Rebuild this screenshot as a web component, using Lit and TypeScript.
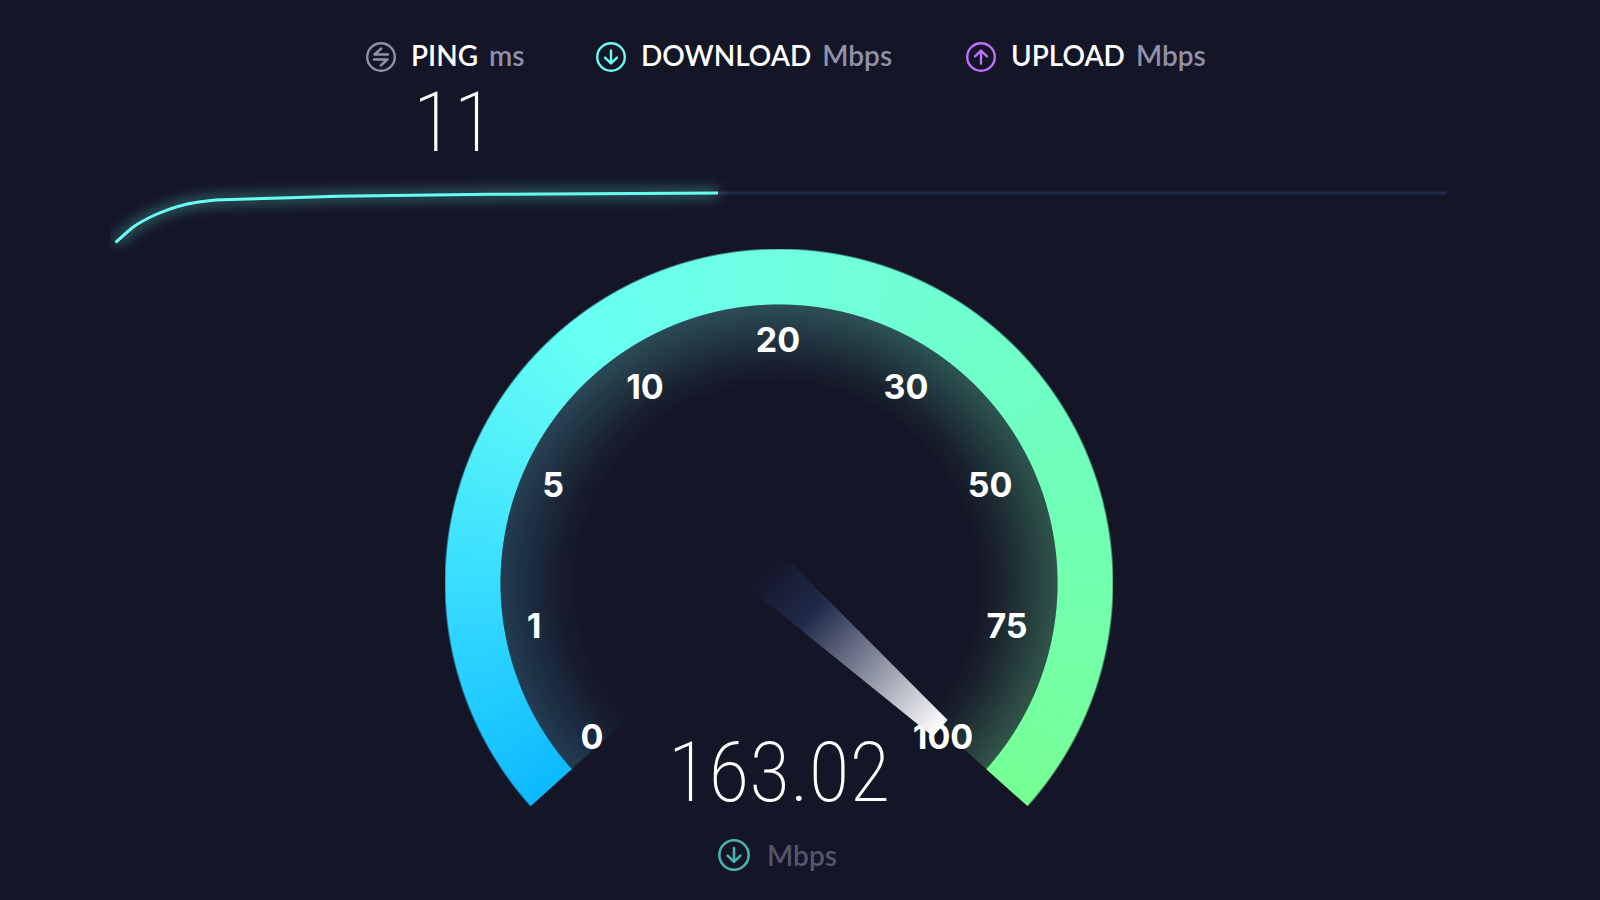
import { LitElement, html, css, svg } from "lit";
import { customElement, property } from "lit/decorators.js";

type IconName = "ping" | "down" | "up";

const ICON_PATHS: Record<IconName, string> = {
  ping: "M16.3 7.5 9.5 13.5H23M15.7 24.5 22.5 18.5H9",
  down: "M16 9.5V22M10 16.6 16 22.4 22 16.6",
  up: "M16 22.5V10M10 15.4 16 9.6 22 15.4",
};

@customElement("round-icon")
export class RoundIcon extends LitElement {
  static styles = css`
    :host {
      display: block;
      width: 32px;
      height: 32px;
    }
    .glyph {
      display: block;
      width: 100%;
      height: 100%;
      fill: none;
      stroke: currentColor;
      stroke-width: 2.4;
      stroke-linecap: round;
      stroke-linejoin: round;
    }
  `;

  @property() name: IconName = "down";

  render() {
    return html`<svg class="glyph" viewBox="0 0 32 32" aria-hidden="true">
      <circle cx="16" cy="16" r="13.8"></circle>
      <path d=${ICON_PATHS[this.name]}></path>
    </svg>`;
  }
}

const TICKS = [
  { value: "0", x: 147, y: 488 },
  { value: "1", x: 89, y: 377 },
  { value: "5", x: 108, y: 236 },
  { value: "10", x: 200, y: 138 },
  { value: "20", x: 333, y: 91 },
  { value: "30", x: 461, y: 138 },
  { value: "50", x: 545, y: 236 },
  { value: "75", x: 562, y: 377 },
  { value: "100", x: 498, y: 488 },
];

@customElement("speed-gauge")
export class SpeedGauge extends LitElement {
  static styles = css`
    :host {
      display: block;
    }
    .dial {
      display: grid;
      width: 668px;
      height: 564px;
      margin: 0 auto;
    }
    .dial > * {
      grid-area: 1 / 1;
    }
    .arc {
      background: conic-gradient(
        from 228deg at 334px 334px,
        #0cb9ff 0deg,
        #22cbff 20deg,
        #3adeff 44deg,
        #54f1fa 70deg,
        #66fff4 92deg,
        #6cffea 114deg,
        #70ffe0 132deg,
        #70ffcc 170deg,
        #70ffb8 206deg,
        #74ffa4 240deg,
        #76ff94 264deg
      );
      clip-path: polygon(334px 334px, 0 634px, 0 0, 100% 0, 668px 634px);
    }
    .ring {
      -webkit-mask: radial-gradient(circle at 334px 334px, transparent 278px, #000 279px, #000 333px, transparent 335px);
      mask: radial-gradient(circle at 334px 334px, transparent 278px, #000 279px, #000 333px, transparent 335px);
    }
    .glow {
      background: conic-gradient(
        from 228deg at 334px 334px,
        #47a6c8 0deg,
        #4aa8c4 50deg,
        #6cd8d8 92deg,
        #70e8d8 132deg,
        #70ffcc 170deg,
        #74ffb0 206deg,
        #86ffa8 264deg
      );
      -webkit-mask: radial-gradient(circle at 334px 334px, transparent 196px, rgba(0, 0, 0, 0.05) 218px, rgba(0, 0, 0, 0.27) 278px, transparent 279px);
      mask: radial-gradient(circle at 334px 334px, transparent 196px, rgba(0, 0, 0, 0.05) 218px, rgba(0, 0, 0, 0.27) 278px, transparent 279px);
    }
    .scale {
      z-index: 1;
      width: 668px;
      height: 564px;
    }
    .tick {
      fill: #fff;
      font: 700 34px Inter, "Liberation Sans", sans-serif;
      text-anchor: middle;
    }
    .reading {
      z-index: 1;
      align-self: end;
      justify-self: center;
      font: 200 84px/80px "Roboto Condensed", Roboto, sans-serif;
      color: #fff;
    }
    .unit {
      display: flex;
      align-items: center;
      justify-content: center;
      gap: 16px;
      height: 36px;
      margin-top: 24px;
      padding-right: 4px;
      font: 600 28px/36px Lato, sans-serif;
      color: #55566a;
    }
    .unit-icon {
      width: 34px;
      height: 34px;
      color: #4ab5b0;
    }
  `;

  @property({ type: Number }) speed = 0;

  render() {
    return html`
      <div class="dial">
        <div class="arc ring"></div>
        <div class="arc glow"></div>
        <svg class="scale" viewBox="0 0 668 564">
          <defs>
            <linearGradient id="needle" gradientUnits="userSpaceOnUse" x1="-22" y1="0" x2="217" y2="0">
              <stop offset="0" stop-color="#1f2b4c" stop-opacity="0"></stop>
              <stop offset="0.28" stop-color="#1f2949"></stop>
              <stop offset="1" stop-color="#ffffff"></stop>
            </linearGradient>
          </defs>
          ${TICKS.map(
            (t) => svg`<text class="tick" x=${t.x} y=${t.y + 12}>${t.value}</text>`
          )}
          <path transform="translate(334 334) rotate(42)" fill="url(#needle)" d="M-24 24 -24 -24 217 -11 217 11Z"></path>
        </svg>
        <output class="reading">${this.speed.toFixed(2)}</output>
      </div>
      <div class="unit">
        <round-icon class="unit-icon" name="down"></round-icon>
        <span>Mbps</span>
      </div>
    `;
  }
}

@customElement("app-root")
export class AppRoot extends LitElement {
  static styles = css`
    :host {
      display: block;
      box-sizing: border-box;
      min-height: 100vh;
      padding: 37px 154px 0 112px;
      background: #141526;
      color: #fff;
      overflow: hidden;
    }
    .results {
      display: grid;
      grid-template-columns: 230px 370px 246px;
      justify-content: center;
      margin: 0;
      padding-left: 18px;
      height: 124px;
    }
    .result {
      display: grid;
      grid-template-columns: 32px auto;
      column-gap: 14px;
      row-gap: 10px;
      align-content: start;
      justify-content: start;
    }
    .icon {
      align-self: end;
    }
    .ping {
      color: #9091a9;
    }
    .down {
      color: #6afff3;
    }
    .up {
      color: #bf71ff;
    }
    .label {
      font: 600 28px/36px Lato, sans-serif;
      white-space: nowrap;
    }
    .measure {
      margin-left: 4px;
      color: #9091a9;
    }
    .value {
      grid-column: 2;
      margin: 0 0 0 2px;
      font: 200 84px/80px "Roboto Condensed", Roboto, sans-serif;
    }
    .progress {
      display: block;
      width: 100%;
      margin-top: 20px;
      overflow: visible;
    }
    .track {
      fill: none;
      stroke: #1f2b4a;
      stroke-width: 3;
    }
    .trace {
      fill: none;
      stroke: #6afff3;
      stroke-width: 3;
    }
    .halo {
      fill: none;
      stroke: #6afff3;
      stroke-opacity: 0.55;
      stroke-width: 6;
      filter: url(#soft);
    }
  `;

  render() {
    const trace =
      "M3.5 61.5C9 57 15 51 20 47C27 41.5 36 37 45 33C58 27.5 70 23.5 85 21.3C92 20 102 19 111 18.7L178 16.7L225 15.3L378 13.3L606 12";
    return html`
      <dl class="results">
        <div class="result">
          <round-icon class="icon ping" name="ping"></round-icon>
          <dt class="label">PING <span class="measure">ms</span></dt>
          <dd class="value">11</dd>
        </div>
        <div class="result">
          <round-icon class="icon down" name="down"></round-icon>
          <dt class="label">DOWNLOAD <span class="measure">Mbps</span></dt>
        </div>
        <div class="result">
          <round-icon class="icon up" name="up"></round-icon>
          <dt class="label">UPLOAD <span class="measure">Mbps</span></dt>
        </div>
      </dl>
      <svg class="progress" viewBox="0 0 1334 68" aria-hidden="true">
        <defs>
          <filter id="soft" filterUnits="userSpaceOnUse" x="-2" y="-20" width="640" height="110">
            <feGaussianBlur stdDeviation="7"></feGaussianBlur>
          </filter>
        </defs>
        <path class="track" d="M606 12H1335"></path>
        <path class="halo" d=${trace}></path>
        <path class="trace" stroke-linejoin="round" d=${trace}></path>
      </svg>
      <speed-gauge .speed=${163.02}></speed-gauge>
    `;
  }
}
